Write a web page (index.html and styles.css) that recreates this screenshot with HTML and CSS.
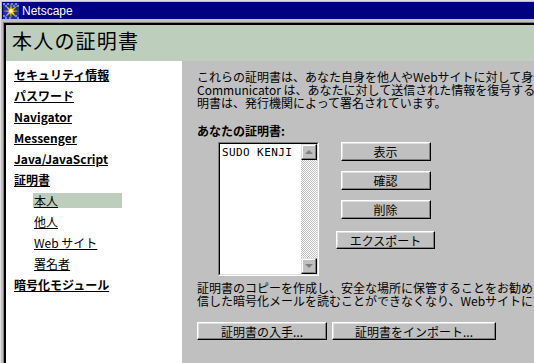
FILE: index.html
```html
<!DOCTYPE html>
<html>
    <head>
        <title>Netscape</title>
        <meta charset="UTF-8">
        <link rel="stylesheet" href="styles.css">
    </head>
    <body>
        <div class="window">
            <div class="titlebar">
                <svg class="appicon" width="16" height="16" viewBox="0 0 16 16">
                    <rect width="16" height="16" fill="#1c2fa8"/>
                    <path d="M0 0h2v2H0zM4 0h2v2H4zM8 0h2v2H8zM12 0h2v2h-2zM2 2h2v2H2zM10 2h2v2h-2zM14 2h2v2h-2zM0 12h2v2H0zM2 14h2v2H2zM12 12h2v2h-2zM14 14h2v2h-2zM6 14h2v2H6z" fill="#6f86e8"/>
                    <path d="M8 1 9 6 14 3 10 7.5 15 8 10 9 13 14 8.5 10.5 8 15 7 10.5 2 14 6 9 1 8 6 7.5 2 2 7 6Z" fill="#ffe800" stroke="#a08000" stroke-width=".5"/>
                    <circle cx="8" cy="8" r="1.6" fill="#fff"/>
                </svg>
                <span class="title">Netscape</span>
            </div>
            <div class="frame">
                <div class="frame-inner">
                    <div class="header">本人の証明書</div>
                    <div class="main">
                        <div class="sidebar">
                            <a class="nav" href="#">セキュリティ情報</a>
                            <a class="nav" href="#">パスワード</a>
                            <a class="nav" href="#">Navigator</a>
                            <a class="nav" href="#">Messenger</a>
                            <a class="nav" href="#">Java/JavaScript</a>
                            <a class="nav" href="#">証明書</a>
                            <div class="sub"><a class="selected" href="#">本人</a></div>
                            <div class="sub"><a href="#">他人</a></div>
                            <div class="sub"><a href="#">Web サイト</a></div>
                            <div class="sub"><a href="#">署名者</a></div>
                            <a class="nav" href="#">暗号化モジュール</a>
                        </div>
                        <div class="content">
                            <p class="text">これらの証明書は、あなた自身を他人やWebサイトに対して身分を証明します。また、<br>Communicator は、あなたに対して送信された情報を復号するためにも使用されます。証<br>明書は、発行機関によって署名されています。</p>
                            <div class="label">あなたの証明書:</div>
                            <div class="certrow">
                                <div class="listbox">
                                    <div class="listbox-inner">
                                        <div class="items">SUDO KENJI</div>
                                        <div class="scrollbar">
                                            <div class="arrow up"><span></span></div>
                                            <div class="track"></div>
                                            <div class="arrow down"><span></span></div>
                                        </div>
                                    </div>
                                </div>
                                <div class="actions">
                                    <button class="btn">表示</button>
                                    <button class="btn">確認</button>
                                    <button class="btn">削除</button>
                                    <button class="btn export">エクスポート</button>
                                </div>
                            </div>
                            <p class="text note">証明書のコピーを作成し、安全な場所に保管することをお勧めします。証明書を紛失すると、受<br>信した暗号化メールを読むことができなくなり、Webサイトに対して身分を証明できなくなります。</p>
                            <div class="bottom">
                                <button class="btn get">証明書の入手...</button>
                                <button class="btn import">証明書をインポート...</button>
                            </div>
                        </div>
                    </div>
                </div>
            </div>
        </div>
    </body>
</html>
```

FILE: styles.css
```css
body{
    margin:0;
    width:534px;
    height:363px;
    overflow:hidden;
    background-color:#c0c0c0;
    font-family:"Noto Sans CJK JP", sans-serif;
    font-size:12px;
    color:#000;
}
.window{
    border-top:1px solid #dfdfdf;
    border-left:1px solid #dfdfdf;
    padding:1px 0 0 1px;
    height:361px;
}
.titlebar{
    height:17px;
    background-color:#000080;
    display:flex;
    align-items:center;
    gap:3px;
    padding-left:1px;
}
.title{
    color:#fff;
    font-family:"Liberation Sans", sans-serif;
    font-size:12px;
}
.frame{
    margin-top:3px;
    margin-left:1px;
    border-top:1px solid #808080;
    border-left:1px solid #808080;
}
.frame-inner{
    border-top:2px solid #000;
    border-left:2px solid #000;
}
.header{
    height:36px;
    line-height:32px;
    background-color:#bdcebd;
    font-size:20px;
    letter-spacing:1.2px;
    padding-left:6px;
}
.main{
    display:flex;
    height:320px;
}
.sidebar{
    width:176px;
    background-color:#fff;
    padding-top:3px;
}
.nav{
    display:block;
    line-height:21px;
    padding-left:8px;
    font-weight:bold;
    color:#000;
}
.sub{
    height:21px;
    display:flex;
    align-items:center;
    padding-left:27px;
}
.sub a{
    display:block;
    width:88px;
    line-height:15px;
    padding-left:1px;
    color:#000;
}
.sub a.selected{
    background-color:#bdcebd;
}
.content{
    flex:1;
    overflow:hidden;
    padding:9px 0 0 15px;
}
.text{
    margin:0;
    line-height:13px;
    white-space:nowrap;
}
.label{
    margin-top:15px;
    line-height:13px;
    font-weight:bold;
}
.certrow{
    display:flex;
    margin-top:5px;
    margin-left:21px;
}
.listbox{
    width:99px;
    height:132px;
    border:1px solid;
    border-color:#808080 #fff #fff #808080;
}
.listbox-inner{
    height:130px;
    border:1px solid;
    border-color:#000 #dfdfdf #dfdfdf #000;
    background-color:#fff;
    display:flex;
}
.items{
    flex:1;
    padding:2px 0 0 2px;
    font-family:"DejaVu Sans Mono", monospace;
    font-size:11px;
    line-height:13px;
    letter-spacing:0.4px;
}
.scrollbar{
    width:16px;
    display:flex;
    flex-direction:column;
}
.track{
    flex:1;
    background:repeating-conic-gradient(#c0c0c0 0 25%, #fff 0 50%) 0 0/2px 2px;
}
.arrow{
    height:16px;
    box-sizing:border-box;
    background-color:#c0c0c0;
    border:1px solid;
    border-color:#dfdfdf #000 #000 #dfdfdf;
    box-shadow:inset -1px -1px #808080, inset 1px 1px #fff;
    display:flex;
    align-items:center;
    justify-content:center;
}
.arrow span{
    width:0;
    height:0;
    border-left:4px solid transparent;
    border-right:4px solid transparent;
}
.up span{
    border-bottom:4px solid #808080;
}
.down span{
    border-top:4px solid #808080;
}
.actions{
    margin-left:17px;
    display:flex;
    flex-direction:column;
    align-items:center;
    gap:10px;
}
.btn{
    height:19px;
    width:90px;
    padding:0;
    background-color:#c0c0c0;
    border:1px solid;
    border-color:#fff #000 #000 #fff;
    box-shadow:inset -1px -1px #808080, inset 1px 1px #dfdfdf;
    font-family:"Noto Sans CJK JP", sans-serif;
    font-size:12px;
    line-height:15px;
    color:#000;
}
.btn.export{
    width:99px;
    height:18px;
    margin-top:2px;
}
.note{
    margin-top:5px;
}
.bottom{
    display:flex;
    gap:5px;
    margin-top:15px;
}
.btn.get{
    width:130px;
    height:18px;
}
.btn.import{
    width:164px;
    height:18px;
}
```
